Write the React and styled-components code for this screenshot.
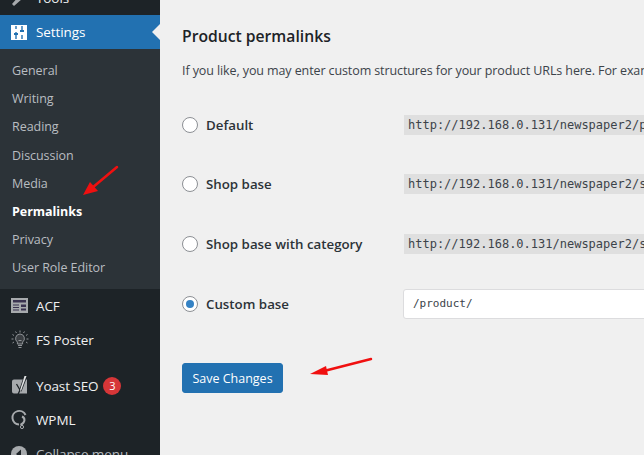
import React from 'react';
import styled, { createGlobalStyle } from 'styled-components';

const GlobalStyle = createGlobalStyle`
  html, body {
    margin: 0;
    padding: 0;
    background: #f0f0f0;
  }
  body {
    font-family: "Open Sans", "Noto Sans", sans-serif;
  }
`;

const Page = styled.div`
  position: relative;
  display: flex;
  width: 644px;
  height: 455px;
  overflow: hidden;
  background: #f0f0f0;
`;

const Sidebar = styled.aside`
  flex: 0 0 160px;
  margin-top: -19px;
  background: #1d2327;
`;

const TopItem = styled.div`
  display: flex;
  align-items: center;
  height: ${(props) => props.$height || 34}px;
  margin-top: ${(props) => props.$gap || 0}px;
  padding-left: 11px;
  color: ${(props) => props.$dim ? '#b4b9be' : '#f0f0f1'};
  font-size: 13.5px;
  letter-spacing: -0.1px;
`;

const ActiveItem = styled(TopItem)`
  position: relative;
  background: #2271b1;
  color: #fff;
  &::after {
    content: '';
    position: absolute;
    right: 0;
    top: 9px;
    border: 8px solid transparent;
    border-right-color: #f0f0f0;
    border-left-width: 0;
  }
`;

const IconSlot = styled.span`
  display: flex;
  flex: 0 0 25px;
  align-items: center;
`;

const Submenu = styled.div`
  display: flex;
  flex-direction: column;
  padding: 7.4px 0 7px;
  background: #2c3338;
`;

const SubItem = styled.div`
  display: flex;
  align-items: center;
  height: 28.2px;
  padding-left: 12px;
  color: ${(props) => props.$current ? '#fff' : '#b9bdc1'};
  font-size: 12.5px;
  font-weight: ${(props) => props.$current ? 700 : 400};
  letter-spacing: -0.05px;
`;

const Badge = styled.span`
  display: inline-flex;
  align-items: center;
  justify-content: center;
  width: 18px;
  height: 18px;
  margin-left: 5px;
  border-radius: 50%;
  background: #d63638;
  color: #fff;
  font-size: 11px;
`;

const Main = styled.main`
  flex: 1;
  min-width: 0;
  padding: 26px 0 0 22px;
`;

const Title = styled.h2`
  margin: 0 0 14px;
  color: #1d2327;
  font-size: 15.7px;
  font-weight: 600;
  line-height: 20px;
`;

const Intro = styled.p`
  margin: 0 0 13px;
  color: #3c434a;
  font-size: 12.5px;
  letter-spacing: -0.1px;
  line-height: 22px;
  white-space: nowrap;
  overflow: hidden;
`;

const OptionList = styled.div`
  display: flex;
  flex-direction: column;
`;

const Option = styled.div`
  display: flex;
  align-items: center;
  height: 59.6px;
`;

const Label = styled.label`
  display: flex;
  flex: 0 0 221px;
  align-items: center;
  gap: 8px;
  color: #2c3338;
  font-size: 13.3px;
  font-weight: 600;
`;

const Radio = styled.span`
  display: flex;
  align-items: center;
  justify-content: center;
  box-sizing: border-box;
  width: 16px;
  height: 16px;
  border: 1px solid #8c8f94;
  border-radius: 50%;
  background: #fff;
  &::before {
    content: '';
    display: ${(props) => props.$checked ? 'block' : 'none'};
    width: 8px;
    height: 8px;
    border-radius: 50%;
    background: #3582c4;
  }
`;

const Code = styled.code`
  margin-left: 1px;
  padding: 2px 4px;
  background: rgba(0, 0, 0, 0.07);
  color: #3c434a;
  font-family: "DejaVu Sans Mono", "Liberation Mono", monospace;
  font-size: 12px;
  line-height: 16px;
  white-space: nowrap;
`;

const Input = styled.input`
  flex: none;
  box-sizing: border-box;
  width: 300px;
  height: 30px;
  padding: 0 9px;
  border: 1px solid #dcdcde;
  border-radius: 3px;
  background: #fff;
  color: #3c434a;
  font-family: "DejaVu Sans Mono", "Liberation Mono", monospace;
  font-size: 11px;
`;

const SaveButton = styled.button`
  display: block;
  width: 101px;
  height: 30px;
  margin-top: 30px;
  padding: 0;
  border: 1px solid #2271b1;
  border-radius: 3px;
  background: #2271b1;
  color: #fff;
  font-family: "Open Sans", "Noto Sans", sans-serif;
  font-size: 12.5px;
`;

const Arrow = styled.svg`
  position: absolute;
  left: ${(props) => props.$left}px;
  top: ${(props) => props.$top}px;
`;

function SettingsIcon() {
  return (
    <svg width="16" height="15" viewBox="0 0 16 15">
      <rect width="16" height="15" fill="#fff" />
      <path d="M5 1v3M5 7v7M11 1v6M11 10v4" stroke="#2271b1" strokeWidth="1.4" />
      <path d="M3 8h4v2H3zM9 5h4v2H9z" fill="#2271b1" />
    </svg>
  );
}

function AcfIcon() {
  return (
    <svg width="17" height="15" viewBox="0 0 17 15">
      <rect width="17" height="15" fill="#a7aaad" />
      <path d="M2 2h13v2.500H2z" fill="#3a3350" />
      <path d="M2 6.500h6v1H2zM2 9h6v1H2zM2 11.500h6v1H2z" fill="#3a3350" />
      <path d="M10 6.500h5v2.500h-5zM10 10.500h5v2h-5z" fill="#3a3350" />
    </svg>
  );
}

function BulbIcon() {
  return (
    <svg width="18" height="19" viewBox="0 0 18 19" fill="none" stroke="#8f9397" strokeWidth="1">
      <path d="M9 4a4.500 4.500 0 0 0-2.600 8.100V14h5.200v-1.900A4.500 4.500 0 0 0 9 4z" fill="#3a3e42" />
      <path d="M7 15.500h4M7.500 17.500h3M9 .5v2M4.500 1.500l1 1.500M13.500 1.500l-1 1.500M1.500 4.500l1.500 1M16.500 4.500l-1.500 1M.5 9h2M15.500 9h2M1.500 13l1.500-1M16.500 13l-1.500-1" />
      <path d="M7.500 8h.1M10.500 8h.1M7.500 10.500h3" />
    </svg>
  );
}

function YoastIcon() {
  return (
    <svg width="18" height="20" viewBox="0 0 18 20">
      <path d="M3 3.500h13v14H3a2 2 0 0 1-2-2v-10a2 2 0 0 1 2-2z" fill="#a7aaad" />
      <path d="M5.500 8l3.500 6-2.500 5.500" fill="none" stroke="#1d2327" strokeWidth="1.300" />
      <path d="M13 0h3.500l-6 15.500-2.500-1z" fill="#1d2327" />
      <path d="M13.500 0h2l-5.500 15-1-.8z" fill="#e4e5e6" />
    </svg>
  );
}

function WpmlIcon() {
  return (
    <svg width="17" height="21" viewBox="0 0 17 21" fill="none" stroke="#a7aaad">
      <path d="M8 15.500A6.800 6.800 0 1 1 14.500 6" strokeWidth="2" />
      <path d="M11 7.500c3.500 1.500 3.500 6 -1.500 8.500" strokeWidth="2" />
      <circle cx="11" cy="18" r="1.600" strokeWidth="1" />
    </svg>
  );
}

function CollapseIcon() {
  return (
    <svg width="16" height="16" viewBox="0 0 16 16">
      <circle cx="8" cy="8" r="8" fill="#a7aaad" />
      <path d="M10 3.500v9L5 8z" fill="#1d2327" />
    </svg>
  );
}

function ToolsIcon() {
  return (
    <svg width="16" height="16" viewBox="0 0 16 16">
      <path d="M1 14l7-8 3 3-8 7zM8 5l3-3 3 1-3 4z" fill="#a7aaad" />
    </svg>
  );
}

const subItems = ['General', 'Writing', 'Reading', 'Discussion', 'Media', 'Permalinks', 'Privacy', 'User Role Editor'];

const options = [
  { name: 'Default', url: 'http://192.168.0.131/newspaper2/product/sample-product/' },
  { name: 'Shop base', url: 'http://192.168.0.131/newspaper2/shop/sample-product/' },
  { name: 'Shop base with category', url: 'http://192.168.0.131/newspaper2/shop/shirts/sample-product/' },
];

export default function App() {
  return (
    <>
      <GlobalStyle />
      <Page>
        <Sidebar>
          <TopItem><IconSlot><ToolsIcon /></IconSlot>Tools</TopItem>
          <ActiveItem><IconSlot><SettingsIcon /></IconSlot>Settings</ActiveItem>
          <Submenu>
            {subItems.map((item) => (
              <SubItem key={item} $current={item === 'Permalinks'}>{item}</SubItem>
            ))}
          </Submenu>
          <TopItem><IconSlot><AcfIcon /></IconSlot>ACF</TopItem>
          <TopItem><IconSlot><BulbIcon /></IconSlot>FS Poster</TopItem>
          <TopItem $gap={12}><IconSlot><YoastIcon /></IconSlot>Yoast SEO<Badge>3</Badge></TopItem>
          <TopItem><IconSlot><WpmlIcon /></IconSlot>WPML</TopItem>
          <TopItem $dim><IconSlot><CollapseIcon /></IconSlot>Collapse menu</TopItem>
        </Sidebar>
        <Main>
          <Title>Product permalinks</Title>
          <Intro>If you like, you may enter custom structures for your product URLs here. For example, using shop would make your product links like</Intro>
          <OptionList>
            {options.map((option) => (
              <Option key={option.name}>
                <Label><Radio />{option.name}</Label>
                <Code>{option.url}</Code>
              </Option>
            ))}
            <Option>
              <Label><Radio $checked />Custom base</Label>
              <Input defaultValue="/product/" />
            </Option>
          </OptionList>
          <SaveButton>Save Changes</SaveButton>
        </Main>
        <Arrow $left={80} $top={162} width="42" height="36" viewBox="0 0 42 36">
          <path d="M37 5L12 26" stroke="#f01010" strokeWidth="2.500" strokeLinecap="round" />
          <path d="M3 33L10 20L18 29z" fill="#f01010" />
        </Arrow>
        <Arrow $left={306} $top={354} width="70" height="24" viewBox="0 0 70 24">
          <path d="M65 5L18 17" stroke="#f01010" strokeWidth="2.500" strokeLinecap="round" />
          <path d="M4 20L20 12L22 21z" fill="#f01010" />
        </Arrow>
      </Page>
    </>
  );
}
